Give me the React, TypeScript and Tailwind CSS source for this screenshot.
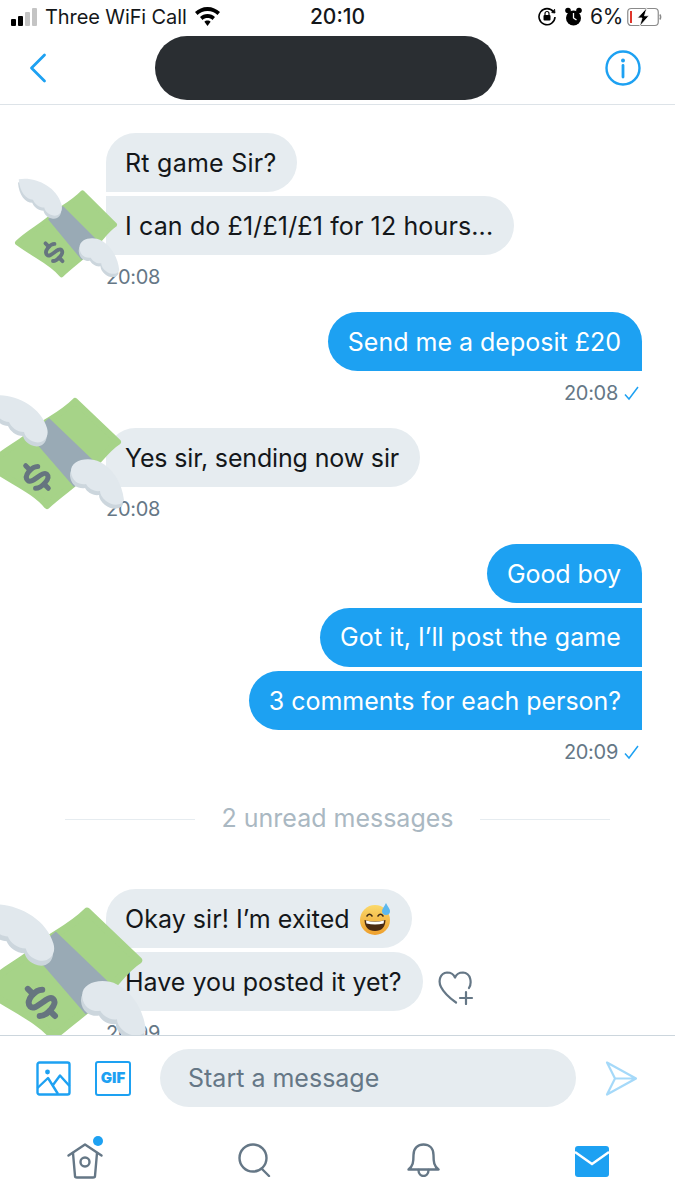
const font = 'font-["Inter","Liberation_Sans",sans-serif]'

function MoneyWings({ className, wingShift = 0 }: { className: string; wingShift?: number }) {
    const upperWing = 'M-10 6 C10 2 40 14 47 38 C50 48 42 54 35 52 C28 50 25 46 24 42 C17 42 11 37 9 32 C0 32 -9 22 -10 6 Z'
    const lowerWing = 'M71 82 C70 70 88 66 100 72 C112 78 122 92 124 110 C122 116 112 116 106 111 C102 108 100 104 100 101 C94 102 88 98 86 94 C80 95 72 92 71 82 Z'
    return (
        <svg className={className} viewBox="-15 0 140 125" preserveAspectRatio="none" overflow="visible">
            <path d="M75 11 L118 52 C108 58 100 70 90 80 C78 92 60 104 47 116 C34 100 12 92 -12 75 C4 60 24 52 40 36 C52 28 64 22 75 11 Z" fill="#a6d388" stroke="#a6d388" strokeWidth="6" strokeLinejoin="round" />
            <path d="M29 45 L49 28 L97 74 L74 97 Z" fill="#99aab5" />
            <g transform="translate(37 87) rotate(-45)" fill="none" stroke="#66757f" strokeWidth="5" strokeLinecap="round" strokeLinejoin="round">
                <path d="M8 -7 C4 -11 -9 -11 -9 -4 C-9 2 9 -1 9 5 C9 11 -5 11 -9 7" />
                <path d="M0 -16 V-10 M0 10 V16" />
            </g>
            <g transform={`translate(0 ${wingShift})`}>
                <path d={upperWing} transform="translate(-1 4)" fill="#ccd6dd" />
                <path d={upperWing} fill="#e1e8ed" />
            </g>
            <path d={lowerWing} transform="translate(-1 4)" fill="#ccd6dd" />
            <path d={lowerWing} fill="#e1e8ed" />
        </svg>
    )
}

function SweatSmile() {
    return (
        <svg className="inline-block ml-[10px] -mt-[2px] w-[31px] h-[33px]" viewBox="0 0 31 33">
            <defs>
                <linearGradient id="face" x1="0" y1="0" x2="0" y2="1">
                    <stop offset="0" stopColor="#fbd96a" />
                    <stop offset="1" stopColor="#ee9f2c" />
                </linearGradient>
            </defs>
            <circle cx="15" cy="18" r="15" fill="url(#face)" />
            <path d="M7 14 Q9.5 10.5 12 14 M18 14 Q20.5 10.5 23 14" fill="none" stroke="#3f2a14" strokeWidth="1.6" strokeLinecap="round" />
            <path d="M4.5 18 Q15 21 25.5 18 Q25 29 15 29 Q5 29 4.5 18 Z" fill="#4a2a12" />
            <path d="M6 18.6 Q15 21 24 18.6 L23.6 21.6 Q15 23.6 6.4 21.6 Z" fill="#fff" />
            <path d="M26 1 C28 5 30 7 30 9 A4 4 0 0 1 22 9 C22 7 24 5 26 1 Z" fill="#5cb8ee" />
        </svg>
    )
}

function Received({ text, rounded, tracking = 'tracking-[0px]', children }: { text: string; rounded: string; tracking?: string; children?: React.ReactNode }) {
    return (
        <div className={`self-start h-[59px] flex items-center pt-[2px] pl-[19px] pr-[21px] bg-[#e6ecf0] text-[#14171a] text-[25px] whitespace-nowrap ${tracking} ${rounded}`}>
            {text}
            {children}
        </div>
    )
}

function Sent({ text, rounded, tracking = 'tracking-[0px]' }: { text: string; rounded: string; tracking?: string }) {
    return (
        <div className={`self-end h-[59px] flex items-center pt-[2px] pl-[20px] pr-[21px] bg-[#1da1f2] text-white text-[25px] whitespace-nowrap ${tracking} ${rounded}`}>
            {text}
        </div>
    )
}

function Time({ text, sent }: { text: string; sent?: boolean }) {
    return (
        <div className={`mt-[10px] h-[24px] flex items-center gap-[6px] text-[20px] tracking-[-0.3px] text-[#657786] ${sent ? 'self-end mr-[3px]' : 'self-start'}`}>
            {text}
            {sent && (
                <svg className="w-[15px] h-[15px]" viewBox="0 0 15 15" fill="none" stroke="#1da1f2" strokeWidth="1.5">
                    <path d="M1 8.5 L5 13 L14 1" />
                </svg>
            )}
        </div>
    )
}

export default function App() {
    return (
        <div className={`w-[675px] h-[1200px] bg-white flex flex-col overflow-hidden ${font}`}>
            {/* Status bar */}
            <div className="h-[33px] shrink-0 grid grid-cols-[1fr_auto_1fr] items-center px-[11px] text-[21px] text-[#14171a]">
                <div className="flex items-center">
                    <div className="flex items-end gap-[2px] h-[20px] pb-[1px]">
                        <div className="w-[5px] h-[7px] rounded-[1px] bg-black" />
                        <div className="w-[5px] h-[10px] rounded-[1px] bg-black" />
                        <div className="w-[5px] h-[14px] rounded-[1px] bg-[#c4c4c4]" />
                        <div className="w-[5px] h-[18px] rounded-[1px] bg-[#c4c4c4]" />
                    </div>
                    <span className="ml-[8px] text-[20px] tracking-[-0.1px]">Three WiFi Call</span>
                    <svg className="ml-[8px] w-[25px] h-[19px]" viewBox="0 0 25 19" fill="black">
                        <path d="M12.5 0 C17.5 0 21.5 2 25 5 L22.5 8 C19.8 5.5 16.5 4 12.5 4 C8.5 4 5.2 5.5 2.5 8 L0 5 C3.5 2 7.5 0 12.5 0 Z" />
                        <path d="M12.5 7 C15.5 7 18 8 20 10 L17.5 13 C16 11.6 14.5 11 12.5 11 C10.5 11 9 11.6 7.5 13 L5 10 C7 8 9.5 7 12.5 7 Z" />
                        <path d="M12.5 13.5 C13.8 13.5 15 14 15.6 14.8 L12.5 19 L9.4 14.8 C10 14 11.2 13.5 12.5 13.5 Z" />
                    </svg>
                </div>
                <div className="text-[21px] font-medium">20:10</div>
                <div className="flex items-center justify-end pr-[2px]">
                    <svg className="w-[18px] h-[19px]" viewBox="0 0 18 19" fill="none" stroke="black" strokeWidth="1.6">
                        <path d="M15.5 5 A8 8 0 1 0 17 10" />
                        <path d="M13.5 5.5 L17 6 L16.5 2" fill="black" strokeWidth="0.8" />
                        <rect x="5.5" y="8" width="7" height="5.5" rx="1" fill="black" stroke="none" />
                        <path d="M7 8 V6.5 A2 2 0 0 1 11 6.5 V8" strokeWidth="1.2" />
                    </svg>
                    <svg className="ml-[9px] w-[17px] h-[20px]" viewBox="0 0 17 20">
                        <circle cx="8.5" cy="11" r="7.5" fill="black" />
                        <circle cx="3" cy="3.5" r="2.8" fill="black" />
                        <circle cx="14" cy="3.5" r="2.8" fill="black" />
                        <path d="M8.5 6 V11 L11.5 13" stroke="white" strokeWidth="1.3" fill="none" />
                    </svg>
                    <span className="ml-[8px] text-[21px] tracking-[-0.3px]">6%</span>
                    <svg className="ml-[4px] w-[35px] h-[20px]" viewBox="0 0 35 20">
                        <rect x="0.75" y="1.5" width="30.5" height="17" rx="3.5" fill="none" stroke="#8a8a8a" strokeWidth="1.2" />
                        <rect x="3" y="4" width="2" height="12" fill="#e0352b" />
                        <path d="M32.8 7.5 Q34.5 10 32.8 12.5" fill="none" stroke="#8a8a8a" strokeWidth="1.5" />
                        <path d="M20 0.5 L10.5 11 H15 L12.5 19.5 L22 8.8 H17.5 Z" fill="black" stroke="white" strokeWidth="0.8" />
                    </svg>
                </div>
            </div>

            {/* Nav */}
            <div className="h-[72px] shrink-0 flex items-center border-b border-[#dde3e8] pb-[1px] pl-[29px]">
                <svg className="w-[18px] h-[30px]" viewBox="0 0 18 30" fill="none" stroke="#1da1f2" strokeWidth="2.8" strokeLinecap="round" strokeLinejoin="round">
                    <path d="M15.5 2 L2.5 15 L15.5 28" />
                </svg>
                <div className="ml-[108px] w-[342px] h-[64px] rounded-full bg-[#2a2e32]" />
                <svg className="ml-[108px] w-[36px] h-[36px]" viewBox="0 0 36 36" fill="none" stroke="#1da1f2">
                    <circle cx="18" cy="18" r="16.5" strokeWidth="2.4" />
                    <circle cx="18" cy="10.5" r="2" fill="#1da1f2" stroke="none" />
                    <path d="M18 15.5 V27" strokeWidth="2.8" strokeLinecap="round" />
                </svg>
            </div>

            {/* Messages */}
            <div className="relative flex-1 min-h-0 overflow-hidden pt-[28px] pl-[106px] pr-[33px] flex flex-col">
                <div className="relative flex flex-col">
                    <div className="flex flex-col gap-[4px]">
                        <Received text="Rt game Sir?" tracking="tracking-[0.25px]" rounded="rounded-t-[30px] rounded-br-[30px]" />
                        <Received text="I can do £1/£1/£1 for 12 hours..." tracking="tracking-[0.13px]" rounded="rounded-r-[30px]" />
                    </div>
                    <MoneyWings wingShift={-12} className="absolute left-[-91px] top-[51px] w-[105px] h-[98px]" />
                    <Time text="20:08" />
                </div>
                <div className="mt-[23px] flex flex-col">
                    <Sent text="Send me a deposit £20" rounded="rounded-t-[30px] rounded-bl-[30px]" />
                    <Time text="20:08" sent />
                </div>
                <div className="relative mt-[23px] flex flex-col">
                    <Received text="Yes sir, sending now sir" tracking="tracking-[-0.15px]" rounded="rounded-t-[30px] rounded-br-[30px]" />
                    <MoneyWings className="absolute left-[-121px] top-[-38px] w-[140px] h-[125px]" />
                    <Time text="20:08" />
                </div>
                <div className="mt-[23px] flex flex-col">
                    <div className="flex flex-col gap-[4.5px]">
                        <Sent text="Good boy" tracking="tracking-[-0.1px]" rounded="rounded-t-[30px] rounded-bl-[30px]" />
                        <Sent text="Got it, I’ll post the game" tracking="tracking-[0.08px]" rounded="rounded-l-[30px]" />
                        <Sent text="3 comments for each person?" tracking="tracking-[-0.03px]" rounded="rounded-l-[30px]" />
                    </div>
                    <Time text="20:09" sent />
                </div>
                <div className="mt-[42px] -ml-[41px] mr-[32px] h-[24px] pt-[2px] flex items-center gap-[26px] text-[25px] text-[#aab8c2]">
                    <div className="flex-1 h-px bg-[#e6ecf0]" />
                    2 unread messages
                    <div className="flex-1 h-px bg-[#e6ecf0]" />
                </div>
                <div className="relative mt-[59px] flex flex-col">
                    <div className="flex flex-col gap-[4px]">
                        <Received text="Okay sir! I’m exited" tracking="tracking-[0.05px]" rounded="rounded-t-[30px] rounded-br-[30px]">
                            <SweatSmile />
                        </Received>
                        <div className="flex items-center">
                            <Received text="Have you posted it yet?" rounded="rounded-r-[30px]" />
                            <svg className="ml-[15px] mt-[13px] w-[36px] h-[34px]" viewBox="0 0 36 34" fill="none" stroke="#657786" strokeWidth="2.2" strokeLinecap="round" strokeLinejoin="round">
                                <path d="M31 17 C34 12 33 2 25 1.5 C21 1.5 18 4 17 6.5 C16 4 13 1.5 9 1.5 C2 2 0 10 3 16 C6 22 13 28 18 31.5" />
                                <path d="M28 21 V33 M22 27 H34" />
                            </svg>
                        </div>
                    </div>
                    <MoneyWings className="absolute left-[-127px] top-[9px] w-[168px] h-[150px]" />
                    <Time text="20:09" />
                </div>
            </div>

            {/* Composer */}
            <div className="shrink-0 border-t border-[#ccd6dd] flex items-center pl-[36px] pt-[13px] pb-[36px]">
                <svg className="w-[35px] h-[35px]" viewBox="0 0 35 35" fill="none" stroke="#1da1f2" strokeWidth="2.4" strokeLinejoin="round">
                    <rect x="1.5" y="1.5" width="32" height="32" rx="2" />
                    <circle cx="11.5" cy="11" r="2.4" fill="#1da1f2" stroke="none" />
                    <path d="M1.5 27 L12 17 L22 33 M17 24 L24 14.5 L33.5 25" />
                </svg>
                <div className="ml-[24px] w-[36px] h-[35px] flex items-center justify-center rounded-[3px] border-[2.4px] border-[#1da1f2] text-[15px] font-black text-[#1da1f2]">
                    GIF
                </div>
                <div className="ml-[29px] w-[416px] h-[58px] flex items-center pt-[2px] pl-[28px] rounded-full bg-[#e6ecf0] text-[25px] text-[#657786]">
                    Start a message
                </div>
                <svg className="ml-[29px] w-[33px] h-[35px]" viewBox="0 0 33 35" fill="none" stroke="#a5d9f9" strokeWidth="2.2" strokeLinejoin="round">
                    <path d="M2 1.5 L31 17.5 L2 33.5 L10 17.5 Z M10 17.5 H31" />
                </svg>
            </div>

            {/* Tabs */}
            <div className="h-[57px] shrink-0 grid grid-cols-4 pl-[1px] items-start">
                <div className="flex justify-center">
                    <div className="relative w-[36px] h-[36px]">
                        <svg className="w-[36px] h-[36px]" viewBox="0 0 36 36" fill="none" stroke="#657786" strokeWidth="2.4" strokeLinejoin="round" strokeLinecap="round">
                            <path d="M1.5 12.5 L18 1.5 L34.5 12.5" />
                            <path d="M6 10 L8 33 Q8 34.5 10 34.5 H26 Q28 34.5 28 33 L30 10" />
                            <circle cx="18" cy="19" r="4.5" />
                        </svg>
                        <div className="absolute right-[0px] top-[-7px] w-[10px] h-[10px] rounded-full bg-[#1da1f2]" />
                    </div>
                </div>
                <div className="flex justify-center">
                    <svg className="ml-[1px] w-[33px] h-[34px]" viewBox="0 0 33 34" fill="none" stroke="#657786" strokeWidth="2.4" strokeLinecap="round">
                        <circle cx="15" cy="15" r="13.5" />
                        <path d="M24 26 L31 33" />
                    </svg>
                </div>
                <div className="flex justify-center">
                    <svg className="ml-[2px] w-[33px] h-[34px]" viewBox="0 0 33 34" fill="none" stroke="#657786" strokeWidth="2.4" strokeLinejoin="round" strokeLinecap="round">
                        <path d="M1.5 26.5 C6 23 6.5 19 6.5 12 C6.5 5 11 1.5 16.5 1.5 C22 1.5 26.5 5 26.5 12 C26.5 19 27 23 31.5 26.5 Z" />
                        <path d="M11.5 27 C11.5 35 21.5 35 21.5 27" />
                    </svg>
                </div>
                <div className="flex justify-center">
                    <svg className="ml-[2px] mt-[3px] w-[34px] h-[31px]" viewBox="0 0 34 31">
                        <rect width="34" height="31" rx="3" fill="#1da1f2" />
                        <path d="M0 6 L17 18 L34 6" fill="none" stroke="white" strokeWidth="2.4" />
                    </svg>
                </div>
            </div>
        </div>
    )
}
